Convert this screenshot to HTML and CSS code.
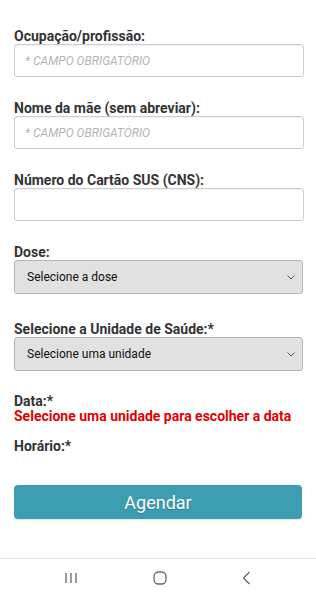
FILE: index.html
```html
<!DOCTYPE html>
<html lang="pt-BR">
<head>
    <meta charset="UTF-8">
    <meta name="viewport" content="width=device-width, initial-scale=1.0">
    <link rel="stylesheet" href="styles.css">
</head>
<body>
	<form class="form-box">
		<div class="field">
			<label>Ocupação/profissão:</label>
			<input type="text" class="txt" placeholder="* CAMPO OBRIGATÓRIO">
		</div>
		<div class="field">
			<label>Nome da mãe (sem abreviar):</label>
			<input type="text" class="txt" placeholder="* CAMPO OBRIGATÓRIO">
		</div>
		<div class="field">
			<label>Número do Cartão SUS (CNS):</label>
			<input type="text" class="txt">
		</div>
		<div class="field field-sel">
			<label>Dose:</label>
			<div class="sel">
				<span>Selecione a dose</span>
				<svg width="8" height="5" viewBox="0 0 8 5"><path d="M0.5 0.5 L4 4 L7.5 0.5" fill="none" stroke="#555" stroke-width="1"/></svg>
			</div>
		</div>
		<div class="field field-unit">
			<label>Selecione a Unidade de Saúde:*</label>
			<div class="sel">
				<span>Selecione uma unidade</span>
				<svg width="8" height="5" viewBox="0 0 8 5"><path d="M0.5 0.5 L4 4 L7.5 0.5" fill="none" stroke="#555" stroke-width="1"/></svg>
			</div>
		</div>
		<div class="field field-date">
			<label>Data:*</label>
			<p class="warn">Selecione uma unidade para escolher a data</p>
		</div>
		<div class="field field-hour">
			<label>Horário:*</label>
		</div>
		<button type="button" class="btn">Agendar</button>
	</form>

	<!-- 하단 네비 -->
	<div class="nav-bar">
		<svg width="14" height="12" viewBox="0 0 14 12"><path d="M2 1v10M7 1v10M12 1v10" stroke="#666" stroke-width="1.3" fill="none"/></svg>
		<svg width="14" height="14" viewBox="0 0 14 14"><rect x="1" y="1" width="12" height="12" rx="4.5" stroke="#666" stroke-width="1.3" fill="none"/></svg>
		<svg width="9" height="14" viewBox="0 0 9 14"><path d="M7.5 1 L1.5 7 L7.5 13" stroke="#666" stroke-width="1.3" fill="none"/></svg>
	</div>
</body>
</html>
```

FILE: styles.css
```css
* {box-sizing: border-box;}
body {margin: 0; font-family: Roboto, "Liberation Sans", sans-serif; background: #fff; color: #333;}

/* 폼 */
.form-box {padding: 29px 14px 0 14px; height: 558px;}
.form-box .field {margin-bottom: 24px;}
.form-box .field label {display: block; font-size: 14px; font-weight: bold; line-height: 15px; color: #333;}
.form-box .field .txt {display: block; width: 290px; height: 33px; margin: 0; padding: 0 10px; border: 1px solid #ccc; border-radius: 3px; font-family: inherit; font-size: 12px; box-shadow: inset 0 1px 1px rgba(0,0,0,0.05); outline: 0;}
.form-box .field .txt::placeholder {color: #b4b4b4; font-style: italic; font-size: 12px;}
.form-box .field-sel {margin-bottom: 28px;}
.form-box .field-unit {margin-bottom: 23px;}
.form-box .sel {display: flex; align-items: center; justify-content: space-between; width: 289px; height: 34px; padding: 0 7px 0 12px; background: #e1e1e1; border: 1px solid #b5b5b5; border-radius: 3px; font-size: 12px; color: #111;}
.form-box .field-date {margin-bottom: 15px;}
.form-box .warn {margin: 0; font-size: 14px; font-weight: bold; line-height: 15px; color: #e10000;}
.form-box .field-hour {margin-bottom: 31px;}
.form-box .btn {display: block; width: 288px; height: 34px; margin: 0; padding: 0; border: 0; border-radius: 4px; background: #3d9db1; color: #fff; font-family: inherit; font-size: 18px; text-shadow: 0 1px 1px rgba(0,0,0,0.25); box-shadow: 0 1px 1px rgba(0,0,0,0.1);}

/* 네비 */
.nav-bar {display: flex; align-items: center; gap: 75px; height: 42px; border-top: 1px solid #e4e4e4; padding: 0 0 4px 64px; background: #fff;}
```
